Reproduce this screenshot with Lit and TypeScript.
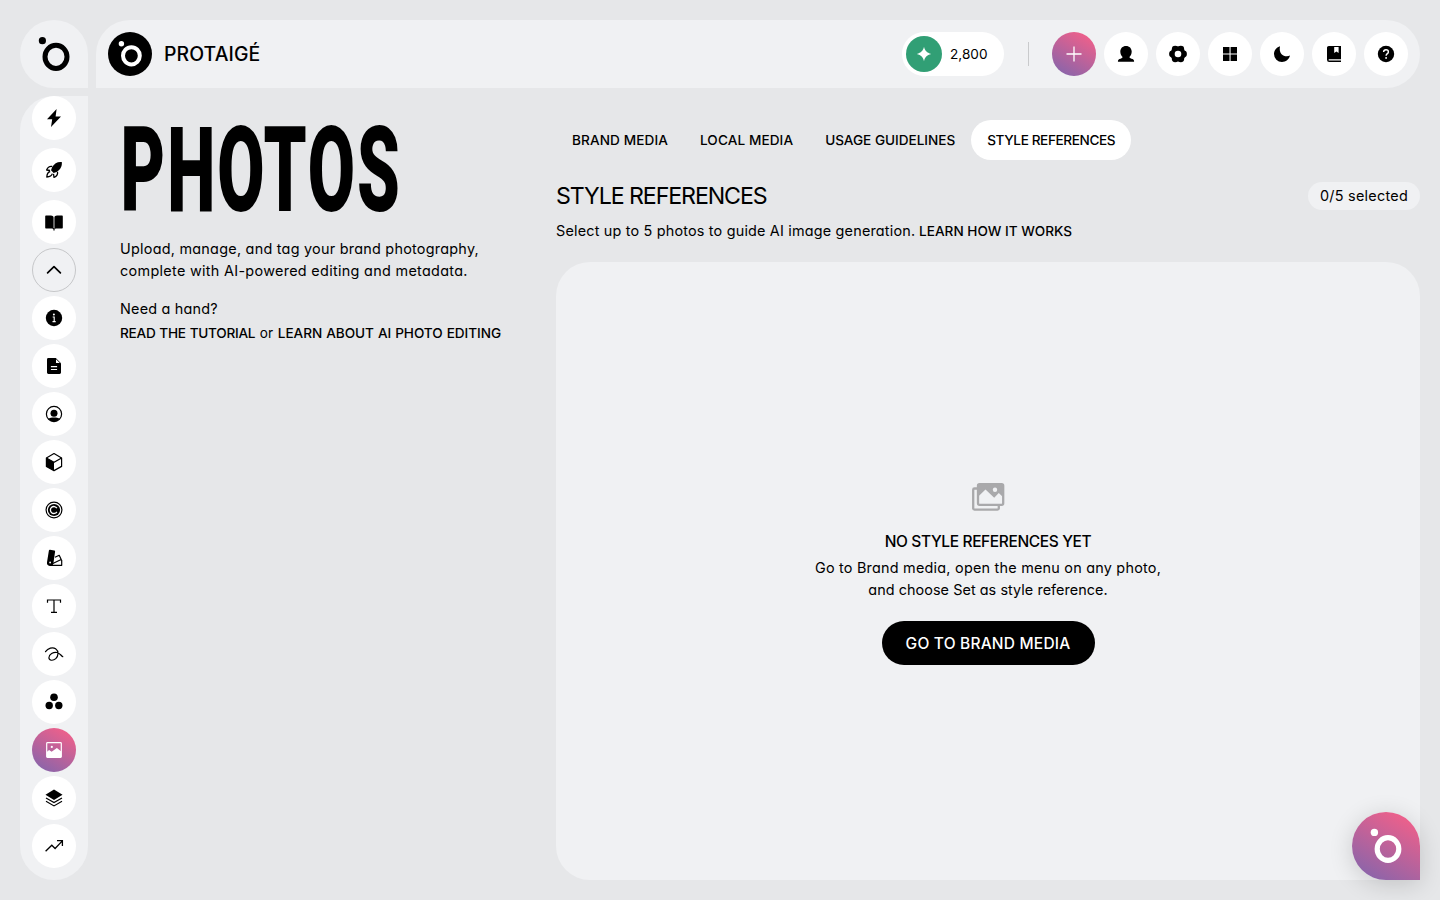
import { LitElement, html, css, svg } from "lit";
import { customElement } from "lit/decorators.js";

const G: Record<string, unknown> = {
  bolt: svg`<path d="M12.6 1 3 11.2h5.2L7 19 17 8.6h-5.4z" fill="currentColor"/>`,
  rocket: svg`<path d="M17.8 2.1c-4.300-.5-7.400 1.400-9.600 4.900L7 10.300l2.700 2.700 3.400-1.300c3.400-2.200 5.200-5.300 4.700-9.600z" fill="currentColor"/><path d="M8.200 6.500C5.500 6 3.700 7.500 2.600 10l3.500.5M13.500 11.800c.5 2.700-1 4.500-3.500 5.600l-.5-3.500M6.200 11.500c-2 .5-3.200 2.200-3.400 5.500 3.300-.1 5-1.300 5.500-3.300" fill="none" stroke="currentColor" stroke-width="1.300" stroke-linejoin="round"/>`,
  book: svg`<path d="M1.200 4.600c0-.6.400-1 1-1H7c1.400 0 2.400.7 2.600 1.800V17c-.4-.3-1-.5-1.700-.5H2.200c-.6 0-1-.4-1-1zM18.800 4.600c0-.6-.4-1-1-1H13c-1.400 0-2.400.7-2.600 1.800V17c.4-.3 1-.5 1.700-.5h5.700c.6 0 1-.4 1-1zM9.400 16h1.200v2.500H9.400z" fill="currentColor"/>`,
  up: svg`<path d="M3.600 12.900 10 6.600l6.400 6.300" fill="none" stroke="currentColor" stroke-width="1.700" stroke-linecap="round" stroke-linejoin="round"/>`,
  info: svg`<circle cx="10" cy="10" r="8.200" fill="currentColor"/><circle cx="9.900" cy="6.400" r="1" fill="#fff"/><path d="M8.700 9h1.500v4.600M8.500 13.600h3.200" fill="none" stroke="#fff" stroke-width="1.100"/>`,
  doc: svg`<path d="M3 3.400C3 2.600 3.600 2 4.400 2h7.400L17 7.200v9.400c0 .8-.6 1.400-1.400 1.400H4.400c-.8 0-1.400-.6-1.400-1.400z" fill="currentColor"/><path d="M12 3.200v3.900h3.900zM6.900 10.100h6.200v1.100H6.900zM6.900 13h6.200v1.100H6.900z" fill="#fff"/>`,
  user: svg`<circle cx="10" cy="10" r="7.600" fill="none" stroke="currentColor" stroke-width="1.200"/><circle cx="10" cy="9.200" r="3.500" fill="currentColor"/><path d="M4 14.800c3.300-1.600 8.700-1.600 12 0a7.900 7.900 0 0 1-12 0z" fill="currentColor"/>`,
  cube: svg`<path d="M10 1.600 17.600 5.900v8.500L10 18.600l-7.600-4.200V5.900z" fill="none" stroke="currentColor" stroke-width="1.200" stroke-linejoin="round"/><path d="M2.400 5.900 10 10.200v8.400l-7.600-4.200z" fill="currentColor"/><path d="M2.400 5.900 10 10.200l7.600-4.300" fill="none" stroke="currentColor" stroke-width="1.200"/>`,
  copy: svg`<circle cx="10" cy="10" r="7.900" fill="none" stroke="currentColor" stroke-width="1.200"/><circle cx="10" cy="10" r="6.100" fill="currentColor"/><path d="M12.900 8.200a3.500 3.500 0 1 0 0 3.600" fill="none" stroke="#fff" stroke-width="1.300"/>`,
  swatch: svg`<path d="M4.900 2.500c.1-.6.500-.9 1.100-.8l4.300.7c.6.100.9.500.8 1.100l-1.700 11.700a3.200 3.200 0 0 1-6.400-.900z" fill="currentColor"/><path d="M11 9.200l4.200-1.900 2 4.200-8.400 4M16.800 12l.9.300v5H6" fill="none" stroke="currentColor" stroke-width="1.200" stroke-linejoin="round"/><circle cx="6.100" cy="14.500" r=".9" fill="#fff"/>`,
  type: svg`<path d="M3.500 6.700V4h13v2.700M10 4v12.300M7 16.300h6" fill="none" stroke="currentColor" stroke-width="1.200"/>`,
  loop: svg`<path d="M1.500 7.700C4 4.300 8.500 2.700 11.600 4.700c3.500 2.400 2.800 7.400.2 9.900-2.700 2.500-6.800 2.100-6.900-.8-.1-3.300 4.600-6.100 8.200-5.300 2.800.6 3.900 3.300 5.700 4.200" fill="none" stroke="currentColor" stroke-width="1.200" stroke-linecap="round"/>`,
  three: svg`<g fill="currentColor"><circle cx="10" cy="5.300" r="3.800"/><circle cx="5.200" cy="13.500" r="3.700"/><circle cx="14.800" cy="13.500" r="3.700"/></g>`,
  image: svg`<rect x="2.700" y="2.700" width="14.600" height="14.600" rx=".8" fill="none" stroke="currentColor" stroke-width="1.200"/><circle cx="7.800" cy="6.900" r="1.100" fill="currentColor"/><path d="M2.700 12l2.400-2 2.500 1.800L12.900 8l4.400 3.600v5.700H2.700z" fill="currentColor"/>`,
  layers: svg`<path d="M10 1.600l8.500 5.200L10 12 1.500 6.800z" fill="currentColor"/><path d="M2 10l8 4.600L18 10M2 13.300l8 4.600 8-4.600" fill="none" stroke="currentColor" stroke-width="1.200"/>`,
  trend: svg`<path d="M1.600 15.300 7.800 9.200l3.300 3.300 7-7.400M13 4.600h5.400V10" fill="none" stroke="currentColor" stroke-width="1.300"/>`,
  plus: svg`<path d="M10 2.500v15M2.500 10h15" fill="none" stroke="currentColor" stroke-width="1.300"/>`,
  person: svg`<path d="M10 1.900c3.400 0 5.700 2.400 5.700 5.600 0 2.300-1 4.300-2.300 5.400.2 1.500 1.600 1.400 3.200 2.200 1 .5 1.500 1.200 1.500 2.600H1.900c0-1.400.5-2.100 1.500-2.600 1.600-.8 3-.7 3.200-2.200C5.300 11.800 4.300 9.800 4.300 7.500c0-3.200 2.300-5.600 5.700-5.600z" fill="currentColor"/>`,
  gear: svg`<g fill="currentColor"><circle cx="10" cy="10" r="7.600"/><circle cx="15.500" cy="10" r="3.400"/><circle cx="4.500" cy="10" r="3.400"/><circle cx="12.800" cy="5.200" r="3.400"/><circle cx="7.200" cy="5.200" r="3.400"/><circle cx="12.800" cy="14.800" r="3.400"/><circle cx="7.200" cy="14.800" r="3.400"/></g><circle cx="10" cy="10" r="3.300" fill="#fff"/>`,
  grid: svg`<path d="M3 3h6.500v6.500H3zM10.600 3h6.400v6.500h-6.400zM3 10.600h6.500V17H3zM10.600 10.600h6.400V17h-6.400z" fill="currentColor"/>`,
  moon: svg`<path d="M8 2.200C5 3 2 6 2 10.100a7.900 7.900 0 0 0 8 7.900c3.800 0 7-2.500 8-6.400-4.500 2-11.800-.500-10-9.400z" fill="currentColor"/>`,
  guide: svg`<path d="M4.800 2H17v13.300H4.700v1.200H17V18H5.200A2.200 2.200 0 0 1 3 15.800v-12C3 2.800 3.800 2 4.800 2z" fill="currentColor"/><path d="M10.200 3v6l2.200-1.600L14.600 9V3z" fill="#fff"/>`,
  help: svg`<circle cx="10" cy="10" r="8.200" fill="currentColor"/><path d="M7.600 8.100c0-1.500 1-2.300 2.400-2.300s2.400.8 2.400 2.100c0 1.700-2.300 1.800-2.300 3.900" fill="none" stroke="#fff" stroke-width="1.400"/><circle cx="10.100" cy="13.900" r=".95" fill="#fff"/>`,
  spark: svg`<path d="M10 2.800c.9 3.900 2.800 6 7.200 7.200-4.400 1.200-6.300 3.300-7.200 7.200-.9-3.900-2.800-6-7.200-7.200 4.400-1.200 6.300-3.300 7.200-7.200z" fill="currentColor"/>`,
};
const icon = (n: string) => html`<svg width="20" height="20" viewBox="0 0 20 20">${G[n]}</svg>`;

@customElement("app-root")
export class AppRoot extends LitElement {
  static styles = css`
    :host { display: block; height: 900px; box-sizing: border-box; padding: 20px; background: #e6e7e9; color: #000;
      font: 400 13.6px/22px Inter, sans-serif; font-feature-settings: "cv11"; position: relative; overflow: hidden; }
    svg { display: block; flex: none; }
    .shell { display: grid; grid-template-columns: 68px 1324px; grid-template-rows: 68px 784px; gap: 8px; }
    .home { background: #f0f1f3; border-radius: 34px 34px 0 34px; }
    header { background: #f0f1f3; border-radius: 34px 34px 34px 0; display: flex; align-items: center; padding: 0 12px; box-sizing: border-box; }
    .name { font-size: 19.4px; font-weight: 500; margin-left: 12px; flex: 1; letter-spacing: .1px; }
    .credits { display: flex; align-items: center; gap: 8px; background: #fff; width: 102px; height: 44px; border-radius: 22px; padding-left: 4px; box-sizing: border-box; }
    .gem { width: 36px; height: 36px; border-radius: 50%; background: #319f75; color: #fff; display: grid; place-items: center; }
    .rule { width: 1px; height: 24px; background: #c9cacc; margin: 0 23px 0 24px; }
    .tools { display: flex; gap: 8px; }
    .btn { width: 44px; height: 44px; border-radius: 50%; background: #fff; display: grid; place-items: center; flex: none; box-sizing: border-box; }
    .hot { background: linear-gradient(30deg, #7d65ae 0%, #f0608a 90%); color: #fff; }
    .ring { background: none; border: 1px solid #c6c7c9; }
    nav { background: #f0f1f3; border-radius: 34px 0 34px 34px; display: flex; flex-direction: column; align-items: center; gap: 4px; }
    .early { margin-bottom: 4px; }
    .main { display: grid; grid-template-columns: 404px 864px; column-gap: 32px; padding: 24px 0 0 24px; }
    .title { margin: 0; padding: 2px 0 0 1px; height: 96px; font: 900 118px/98px Roboto, sans-serif; letter-spacing: 3.4px; transform: scaleX(.58); transform-origin: 0 0; white-space: nowrap; width: 0; }
    .side p { margin: 0; white-space: nowrap; }
    .side .intro { padding-top: 20px; font-size: 14.4px; letter-spacing: .25px; }
    .side .l2 { letter-spacing: .31px; }
    .side .hand { margin-top: 16px; font-size: 14.4px; letter-spacing: .2px; }
    .side .links { line-height: 24px; margin-top: 1px; word-spacing: .5px; }
    .read { letter-spacing: -.25px; }
    .or { letter-spacing: .3px; }
    .learn { letter-spacing: -.06px; }
    b { font-weight: 500; }
    .tabs { display: flex; height: 40px; }
    .tab { padding: 0 16px; line-height: 40px; font-weight: 500; border-radius: 20px; white-space: nowrap; letter-spacing: .1px; }
    .tab.t2 { letter-spacing: -.03px; }
    .tab.t3 { letter-spacing: -.39px; background: #fff; }
    .head { display: flex; align-items: center; justify-content: space-between; height: 36px; margin-top: 18px; }
    .h2 { font-size: 23.2px; letter-spacing: -1.1px; white-space: nowrap; }
    .pill { background: #f0f1f3; border-radius: 14px; height: 28px; line-height: 28px; padding: 0 12px; font-size: 14.4px; letter-spacing: .26px; }
    .sub { margin-top: 6px; }
    .select { font-size: 14.4px; letter-spacing: .19px; }
    .panel { margin-top: 20px; height: 618px; background: #f0f1f3; border-radius: 34px 34px 0 34px; display: flex; flex-direction: column; align-items: center; box-sizing: border-box; padding-top: 217px; text-align: center; white-space: nowrap; }
    .empty { font-size: 15.5px; font-weight: 500; line-height: 24px; margin-top: 15px; letter-spacing: -.38px; }
    .hint { margin-top: 3px; font-size: 14.4px; letter-spacing: .23px; }
    .h2nd { letter-spacing: .06px; }
    .cta { margin-top: 20px; width: 213px; height: 44px; border-radius: 22px; background: #000; color: #fff; font-size: 15.5px; font-weight: 500; line-height: 45px; letter-spacing: .2px; }
    .fab { position: absolute; right: 20px; bottom: 20px; width: 68px; height: 68px; border-radius: 34px 34px 0 34px; box-shadow: 0 4px 24px rgba(0,0,0,.16); }
  `;
  render() {
    return html`
      <div class="shell">
        <div class="home"><svg width="68" height="68"><ellipse cx="36" cy="36.800" rx="11" ry="11.600" fill="none" stroke="#000" stroke-width="5"/><circle cx="22.400" cy="20.700" r="3.600"/></svg></div>
        <header>
          <svg width="44" height="44"><circle cx="22" cy="22" r="22"/><ellipse cx="23.400" cy="23.800" rx="8.400" ry="8.600" fill="none" stroke="#fff" stroke-width="4"/><circle cx="13.400" cy="11.700" r="2.700" fill="#fff"/></svg>
          <div class="name">PROTAIGÉ</div>
          <div class="credits"><div class="gem">${icon("spark")}</div><span>2,800</span></div>
          <div class="rule"></div>
          <div class="tools"><div class="btn hot">${icon("plus")}</div>
            ${["person", "gear", "grid", "moon", "guide", "help"].map((n) => html`<div class="btn">${icon(n)}</div>`)}</div>
        </header>
        <nav>
          ${["bolt", "rocket", "book", "up", "info", "doc", "user", "cube", "copy", "swatch", "type", "loop", "three", "image", "layers", "trend"].map((n, i) => html`<div class="btn ${n === "image" ? "hot" : n === "up" ? "ring" : ""} ${i < 2 ? "early" : ""}">${icon(n)}</div>`)}
        </nav>
        <div class="main">
          <div class="side">
            <h1 class="title">PHOTOS</h1>
            <p class="intro">Upload, manage, and tag your brand photography,<br><span class="l2">complete with AI-powered editing and metadata.</span></p>
            <p class="hand">Need a hand?</p>
            <p class="links"><b class="read">READ THE TUTORIAL</b> <span class="or">or</span> <b class="learn">LEARN ABOUT AI PHOTO EDITING</b></p>
          </div>
          <div>
            <div class="tabs">
              ${["BRAND MEDIA", "LOCAL MEDIA", "USAGE GUIDELINES", "STYLE REFERENCES"].map((t, i) => html`<div class="tab t${i}">${t}</div>`)}
            </div>
            <div class="head"><div class="h2">STYLE REFERENCES</div><div class="pill">0/5 selected</div></div>
            <div class="sub"><span class="select">Select up to 5 photos to guide AI image generation.</span> <b>LEARN HOW IT WORKS</b></div>
            <div class="panel">
              <svg width="36" height="36" viewBox="0 0 36 36" fill="none" stroke="#a9a9ab"><path d="M7 9.500H4.500a1.300 1.300 0 0 0-1.300 1.300v18.500a1.300 1.300 0 0 0 1.300 1.300h23a1.300 1.300 0 0 0 1.300-1.300V27" stroke-width="2.300"/><rect x="8" y="5.200" width="25.200" height="20.600" rx="1.500" stroke-width="2.300"/><path d="M8 5.200h25.200v13L28.800 14l-4.600 4.800-8.700-8.300L8 17.800z" fill="#a9a9ab" stroke="none"/><circle cx="25" cy="10.800" r="2.200" fill="#f0f1f3" stroke="none"/></svg>
              <div class="empty">NO STYLE REFERENCES YET</div>
              <div class="hint">Go to Brand media, open the menu on any photo,<br><span class="h2nd">and choose Set as style reference.</span></div>
              <div class="cta">GO TO BRAND MEDIA</div>
            </div>
          </div>
        </div>
      </div>
      <div class="fab hot"><svg width="68" height="68"><ellipse cx="36" cy="37" rx="10.800" ry="11.400" fill="none" stroke="#fff" stroke-width="5.200"/><circle cx="22.400" cy="20.400" r="3.700" fill="#fff"/></svg></div>
    `;
  }
}
